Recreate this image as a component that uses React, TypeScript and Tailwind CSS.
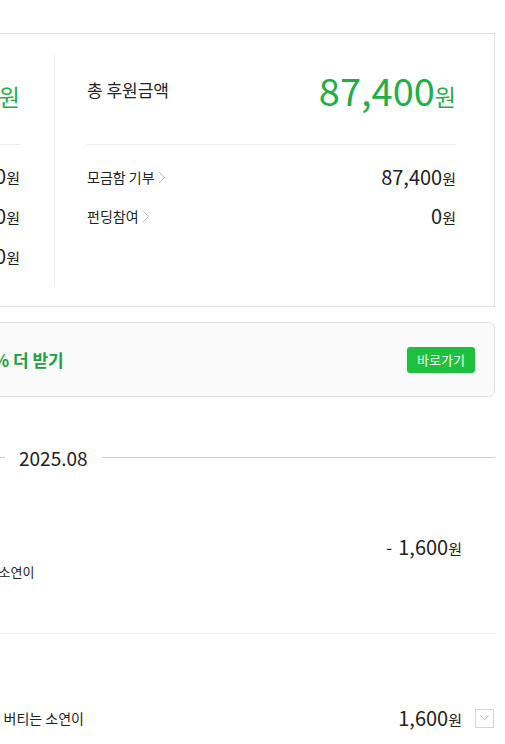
import React from 'react';

const font = { fontFamily: '"Noto Sans CJK KR", "Noto Sans", sans-serif' };

function Chevron() {
  return (
    <svg width="8" height="13" viewBox="0 0 8 13" className="ml-[3px] inline-block">
      <path d="M1 1l5.5 5.5L1 12" fill="none" stroke="#c2c2c2" strokeWidth="1" />
    </svg>
  );
}

function Won({ value, big }: { value: string; big?: boolean }) {
  return (
    <span className="flex items-baseline">
      <span className={big ? 'text-[38px] leading-none' : 'text-[20px] leading-none'}>{value}</span>
      <span className={big ? 'text-[23px] leading-none' : 'text-[15px] leading-none'}>원</span>
    </span>
  );
}

export default function App() {
  return (
    <div className="min-h-screen w-[505px] overflow-hidden bg-white text-[#222]" style={font}>
      <div className="ml-[-471px] w-[966px] pt-[33px]">
        {/* 요약 카드 */}
        <div className="flex border border-[#e1e1e1] py-[21px]">
          <div className="flex-1 pb-[17px] pl-[40px] pr-[34px]">
            <div className="flex h-[70px] items-center justify-between">
              <span className="text-[17px]">나의 기부금액</span>
              <span className="text-[#1eb046]">
                <Won value="87,400" big />
              </span>
            </div>
            <div className="mt-[19px] h-px bg-[#ececec]" />
            <div className="mt-[19px] flex flex-col gap-[16px]">
              <div className="flex h-6 items-center justify-between">
                <span className="text-[14px]">해피빈 콩</span>
                <Won value="0" />
              </div>
              <div className="flex h-6 items-center justify-between">
                <span className="text-[14px]">기부 포인트</span>
                <Won value="0" />
              </div>
              <div className="flex h-6 items-center justify-between">
                <span className="text-[14px]">정기 기부</span>
                <Won value="0" />
              </div>
            </div>
          </div>
          <div className="w-px self-stretch bg-[#ececec]" />
          <div className="ml-[32px] mr-[38px] w-[369px]">
            <div className="flex h-[70px] items-center justify-between">
              <span className="text-[17px]">총 후원금액</span>
              <span className="text-[#1eb046]">
                <Won value="87,400" big />
              </span>
            </div>
            <div className="mt-[19px] h-px bg-[#ececec]" />
            <div className="mt-[20px] flex flex-col gap-[15px]">
              <div className="flex h-6 items-center justify-between">
                <span className="flex items-center text-[14px]">
                  모금함 기부
                  <Chevron />
                </span>
                <Won value="87,400" />
              </div>
              <div className="flex h-6 items-center justify-between">
                <span className="flex items-center text-[14px]">
                  펀딩참여
                  <Chevron />
                </span>
                <Won value="0" />
              </div>
            </div>
          </div>
        </div>

        {/* 배너 */}
        <div className="mt-[15px] flex h-[75px] items-center justify-between rounded-md border border-[#e1e1e1] bg-[#fafafa] pl-[316px] pr-[19px]">
          <span className="text-[17px] font-bold text-[#1da141]">해피빈 콩 충전하고 5% 더 받기</span>
          <button className="flex h-[26px] w-[68px] items-center justify-center rounded-[3px] bg-[#1ec13f] text-[13px] text-white">
            바로가기
          </button>
        </div>

        {/* 월 구분 */}
        <div className="mt-[48px] flex h-6 items-center">
          <div className="h-px w-[476px] bg-[#cfcfcf]" />
          <span className="mx-[14px] text-[19px] leading-none">2025.08</span>
          <div className="h-px flex-1 bg-[#cfcfcf]" />
        </div>

        {/* 내역 */}
        <div className="flex items-start justify-between border-b border-[#ececec] pb-[49px] pl-[319px] pr-[33px] pt-[66px]">
          <div className="flex flex-col">
            <span className="h-6 text-[15px] leading-6">콩 환불</span>
            <span className="h-[25px] text-[13px] leading-[25px]">모금함 · 하루하루를 버티는 소연이</span>
          </div>
          <span className="flex h-6 items-center">
            <span className="mr-[6px] text-[17px]">-</span>
            <Won value="1,600" />
          </span>
        </div>

        <div className="flex h-[107px] items-end pb-[11px] pl-[407px]">
          <div className="flex h-6 flex-1 items-center justify-between">
            <span className="text-[14px]">하루하루를 버티는 소연이</span>
            <span className="flex items-center">
              <Won value="1,600" />
              <span className="ml-[13px] mr-[1px] flex h-[19px] w-[19px] items-center justify-center border border-[#d6d6d6]">
                <svg width="9" height="6" viewBox="0 0 9 6">
                  <path d="M0.5 0.5l4 4.5 4-4.5" fill="none" stroke="#bdbdbd" strokeWidth="1" />
                </svg>
              </span>
            </span>
          </div>
        </div>
      </div>
    </div>
  );
}
